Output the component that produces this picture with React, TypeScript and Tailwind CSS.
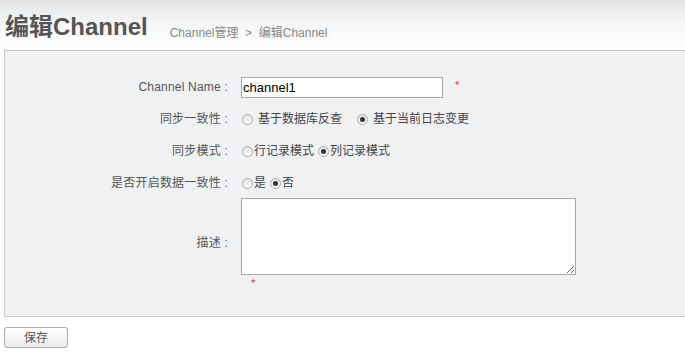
import React from 'react';

const FONT = { fontFamily: '"Liberation Sans", Arial, "Noto Sans CJK SC", sans-serif' };

const Radio: React.FC<{ checked?: boolean; className?: string }> = ({ checked, className = '' }) => (
  <span
    className={`inline-flex h-[11px] w-[11px] shrink-0 items-center justify-center rounded-full border border-[#a9a9a9] bg-gradient-to-b from-[#e4e4e4] to-[#fafafa] ${className}`}
  >
    {checked && <span className="h-[5px] w-[5px] rounded-full bg-[#333]" />}
  </span>
);

const Star: React.FC<{ className?: string }> = ({ className = '' }) => (
  <span className={`text-[11px] leading-none text-[#e8333a] ${className}`}>*</span>
);

const Row: React.FC<{ label: string; h?: string; children: React.ReactNode }> = ({ label, h = 'h-[32px]', children }) => (
  <div className={`flex items-center ${h}`}>
    <div className="w-[223px] shrink-0 text-right text-[12px] tracking-[0.2px] text-[#555]">{label} :</div>
    <div className="ml-[13px] flex items-center text-[12px] text-[#444]">{children}</div>
  </div>
);

export default function App() {
  return (
    <div className="h-[352px] w-[685px] overflow-hidden bg-white" style={FONT}>
      {/* Header */}
      <div className="flex h-[50px] items-end bg-gradient-to-b from-[#e2e4e6] via-[#f6f7f8] to-white pb-[11px]">
        <h1 className="ml-[5px] text-[24px] font-bold leading-none text-[#555]">编辑Channel</h1>
        <div className="ml-[22px] text-[12px] leading-none text-[#888]">
          Channel管理 &nbsp;&gt;&nbsp; 编辑Channel
        </div>
      </div>

      {/* Form panel */}
      <div className="ml-[4px] border border-r-0 border-[#c9c9c9] bg-[#f0f1f3] pt-[20px] pb-[29px]">
        <Row label="Channel Name">
          <input
            defaultValue="channel1"
            className="h-[21px] w-[202px] border border-[#a8a8a8] bg-white px-[1px] text-[13px] text-black outline-none"
            style={FONT}
          />
          <Star className="ml-[12px] -mt-[3px]" />
        </Row>
        <Row label="同步一致性">
          <Radio className="ml-[1px]" />
          <span className="ml-[5px]">基于数据库反查</span>
          <Radio checked className="ml-[15px]" />
          <span className="ml-[5px]">基于当前日志变更</span>
        </Row>
        <Row label="同步模式">
          <Radio className="ml-[1px]" />
          <span className="ml-[1px]">行记录模式</span>
          <Radio checked className="ml-[4px]" />
          <span className="ml-[1px]">列记录模式</span>
        </Row>
        <Row label="是否开启数据一致性">
          <Radio className="ml-[1px]" />
          <span className="ml-[1px]">是</span>
          <Radio checked className="ml-[4px]" />
          <span className="ml-[1px]">否</span>
        </Row>
        <Row label="描述" h="h-[88px]">
          <div className="flex flex-col self-start">
            <textarea className="h-[77px] w-[335px] border border-[#a8a8a8] bg-white outline-none" />
            <Star className="ml-[10px] mt-[3px]" />
          </div>
        </Row>
      </div>

      {/* Save */}
      <button className="ml-[4px] mt-[10px] h-[21px] w-[64px] rounded-[3px] border border-[#ababab] bg-gradient-to-b from-white to-[#ebebeb] text-[12px] text-[#555]">
        保存
      </button>
    </div>
  );
}
